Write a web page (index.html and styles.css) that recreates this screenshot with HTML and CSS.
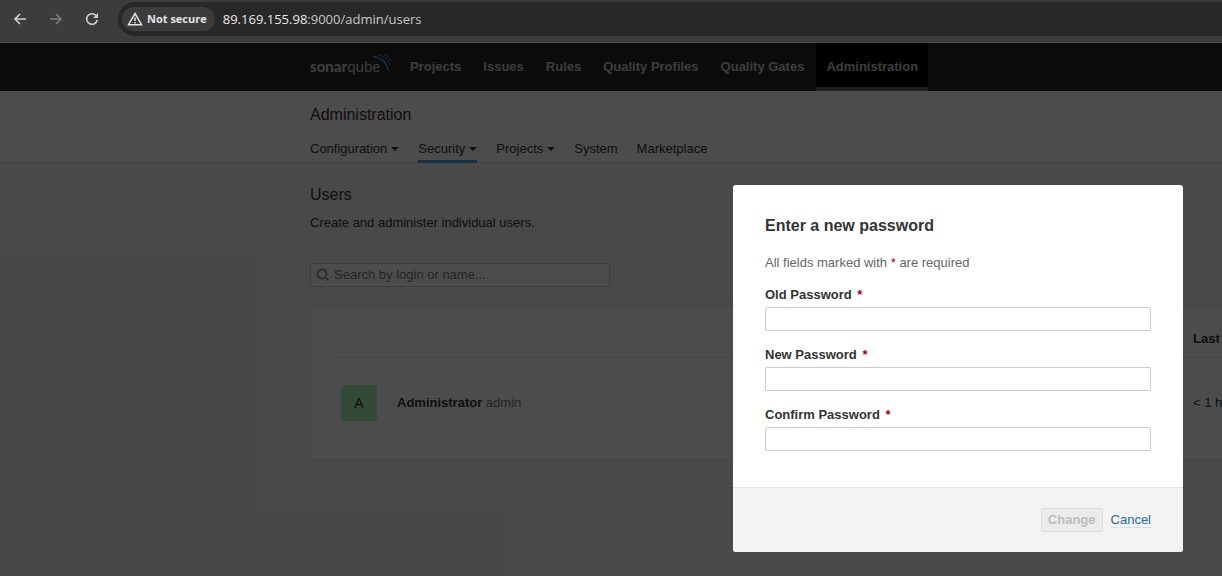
FILE: index.html
```html
<!DOCTYPE html>
<html lang="en">
<head>
<meta charset="utf-8">
<title>Users - Administration</title>
<link rel="stylesheet" href="styles.css">
</head>
<body>
<header class="browser">
  <div class="tools">
    <button class="tool" aria-label="Back"><svg width="16" height="16" viewBox="0 0 16 16"><path d="M14 8H3.200M8 3L3 8L8 13"/></svg></button>
    <button class="tool tool-off" aria-label="Forward" disabled><svg width="16" height="16" viewBox="0 0 16 16"><path d="M2 8H12.800M8 3L13 8L8 13"/></svg></button>
    <button class="tool" aria-label="Reload"><svg width="16" height="16" viewBox="0 0 16 16"><path d="M13.200 9A5.300 5.300 0 1 1 12 4.500"/><path class="tip" d="M14 2V7H9Z"/></svg></button>
  </div>
  <div class="address">
    <button class="secure"><svg width="16" height="14" viewBox="0 0 16 14"><path d="M8 1.500L14.500 12.700H1.500Z"/><path d="M8 5.500V9M8 10V11.500"/></svg>Not secure</button>
    <span class="url"><span class="host">89.169.155.98</span>:9000/admin/users</span>
  </div>
</header>
<div class="app">
  <nav class="global">
    <a class="logo" href="#"><b>sonar</b>qube<svg width="20" height="20" viewBox="0 0 20 20"><path d="M1 3.500C8 3.500 15 9 16 18" stroke-width="1.600"/><path d="M7 1.800C12 3 16.500 7 18 12.500"/><path d="M12 1C15 2.500 17.500 5 19 8"/></svg></a>
    <a href="#">Projects</a>
    <a href="#">Issues</a>
    <a href="#">Rules</a>
    <a href="#">Quality Profiles</a>
    <a href="#">Quality Gates</a>
    <a href="#" class="current">Administration</a>
  </nav>
  <div class="context">
    <h1>Administration</h1>
    <nav class="tabs">
      <a href="#">Configuration<i class="caret"></i></a>
      <a href="#" class="selected">Security<i class="caret"></i></a>
      <a href="#">Projects<i class="caret"></i></a>
      <a href="#">System</a>
      <a href="#">Marketplace</a>
    </nav>
  </div>
  <main class="page">
    <h2>Users</h2>
    <p>Create and administer individual users.</p>
    <label class="search">
      <svg width="14" height="14" viewBox="0 0 14 14"><circle cx="6" cy="6" r="4.500"/><path d="M9.300 9.300L12.500 12.500"/></svg>
      <input type="search" placeholder="Search by login or name..." aria-label="Search by login or name">
    </label>
    <div class="rule"></div>
    <section class="panel">
      <table>
        <colgroup><col class="col-avatar"><col class="col-name"><col></colgroup>
        <thead><tr><th></th><th></th><th>Last</th></tr></thead>
        <tbody><tr><td><span class="avatar">A</span></td><td><strong>Administrator</strong> <span class="login">admin</span></td><td>&lt; 1 h</td></tr></tbody>
      </table>
    </section>
  </main>
  <div class="overlay">
    <form class="modal" role="dialog" aria-labelledby="modal-title">
      <div class="modal-body">
        <h2 id="modal-title">Enter a new password</h2>
        <p>All fields marked with <em>*</em> are required</p>
        <label for="old">Old Password <em>*</em></label>
        <input id="old" type="password">
        <label for="new">New Password <em>*</em></label>
        <input id="new" type="password">
        <label for="confirm">Confirm Password <em>*</em></label>
        <input id="confirm" type="password">
      </div>
      <footer>
        <button class="change" disabled>Change</button>
        <a href="#">Cancel</a>
      </footer>
    </form>
  </div>
</div>
</body>
</html>
```
FILE: styles.css
```css
* { box-sizing: border-box; }
body {
  margin: 0;
  min-height: 100vh;
  display: flex;
  flex-direction: column;
  overflow-x: hidden;
  font: 13px/20px "Liberation Sans", Arial, sans-serif;
  color: #333;
}
h1, h2, p { margin: 0; }
a { color: inherit; text-decoration: none; }
button, input { font: inherit; }
svg { fill: none; stroke: currentColor; }

.browser {
  display: flex;
  align-items: center;
  gap: 18px;
  height: 43px;
  padding: 0 0 4px 12px;
  background: #3c3c3c;
  border-bottom: 1px solid #4a4a4a;
  font-family: "Open Sans", "Noto Sans", sans-serif;
}
.tools {
  display: flex;
  gap: 20px;
}
.tool {
  display: flex;
  padding: 0;
  border: 0;
  background: none;
  color: #d0d0d0;
}
.tool svg { stroke-width: 1.6; }
.tool .tip {
  fill: currentColor;
  stroke: none;
}
.tool-off { color: #7c7c7c; }
.address {
  flex: 1;
  display: flex;
  align-items: center;
  gap: 8px;
  height: 34px;
  padding-left: 4px;
  border-radius: 17px 0 0 17px;
  background: #282828;
}
.secure {
  display: flex;
  align-items: center;
  gap: 4px;
  height: 24px;
  padding: 0 8px 0 5px;
  border: 0;
  border-radius: 12px;
  background: #3c3c3c;
  color: #e3e3e3;
  font-size: 11px;
  font-weight: bold;
}
.secure svg { stroke-width: 1.5; }
.url { color: #c7c7c7; }
.host { color: #e8e8e8; }

.app {
  position: relative;
  flex: 1;
  background: #f3f3f3;
}
.global {
  display: flex;
  gap: 2px;
  height: 48px;
  padding-left: 310px;
  background: #262626;
  color: #ccc;
  font-weight: bold;
  line-height: 48px;
  white-space: nowrap;
}
.global a { padding: 0 10px; }
.global .current {
  background: #000;
  border-bottom: 4px solid #686868;
}
.global .logo {
  display: flex;
  width: 88px;
  padding: 0;
  font: 15px/46px Lato, sans-serif;
}
.logo b { font-weight: 900; }
.logo svg {
  flex: none;
  margin: 10px 0 0 -8px;
  color: #4b9fd5;
}
.context {
  height: 72px;
  padding: 14px 0 0 310px;
  background: #fff;
  border-bottom: 1px solid #e6e6e6;
}
h1, h2 {
  font-size: 16px;
  font-weight: normal;
  line-height: 20px;
}
.tabs {
  display: flex;
  gap: 19px;
  padding-top: 14px;
}
.tabs a {
  height: 24px;
  border-bottom: 3px solid transparent;
}
.tabs .selected { border-color: #4b9fd5; }
.caret {
  display: inline-block;
  margin-left: 4px;
  vertical-align: 2px;
  border: 4px solid transparent;
  border-top-color: currentColor;
  border-bottom: 0;
}
.page { padding: 22px 0 0 310px; }
.page p { padding-top: 8px; }
.search {
  display: flex;
  align-items: center;
  gap: 4px;
  width: 300px;
  height: 24px;
  margin-top: 30px;
  padding-left: 5px;
  border: 1px solid #ccc;
  border-radius: 2px;
  background: #fff;
}
.search svg {
  color: #999;
  stroke-width: 2;
}
.search input {
  flex: 1;
  padding: 0;
  border: 0;
  background: none;
}
.search input::placeholder { color: #777; }
.rule {
  margin-top: 10px;
  border-top: 1px solid #ebebeb;
}
.panel {
  margin-top: 8px;
  padding: 0 0 20px 20px;
  border: 1px solid #e6e6e6;
  border-right: 0;
  background: #fff;
  overflow: hidden;
}
table {
  width: 100%;
  table-layout: fixed;
  border-collapse: collapse;
  white-space: nowrap;
}
.col-avatar { width: 56px; }
.col-name { width: 796px; }
th {
  height: 50px;
  padding: 15px 0 0 10px;
  border-bottom: 1px solid #e6e6e6;
  text-align: left;
}
td {
  height: 82px;
  padding: 9px 0 0 10px;
}
.avatar {
  display: block;
  width: 36px;
  height: 36px;
  border-radius: 2px;
  background: #acf3be;
  font-size: 14px;
  line-height: 36px;
  text-align: center;
}
.login { color: #777; }

.overlay {
  position: absolute;
  inset: 0;
  display: flex;
  justify-content: flex-end;
  align-items: flex-start;
  padding: 142px 39px 0 0;
  background: rgba(0, 0, 0, 0.7);
}
.modal {
  width: 450px;
  border-radius: 3px;
  background: #fff;
  overflow: hidden;
}
.modal-body { padding: 31px 32px 36px; }
.modal h2 {
  font-weight: bold;
  padding-bottom: 17px;
}
.modal p {
  padding-bottom: 12px;
  color: #666;
}
.modal label {
  display: block;
  padding-bottom: 2px;
  font-weight: bold;
}
.modal em {
  color: #a4030f;
  font-style: normal;
}
.modal label em { padding-left: 2px; }
.modal input {
  display: block;
  width: 100%;
  height: 24px;
  border: 1px solid #ccc;
  border-radius: 2px;
}
.modal input + label { padding-top: 14px; }
.modal footer {
  display: flex;
  justify-content: flex-end;
  align-items: center;
  gap: 8px;
  height: 65px;
  padding: 0 32px;
  border-top: 1px solid #e6e6e6;
  background: #f3f3f3;
}
.change {
  height: 24px;
  padding: 0 6px;
  border: 1px solid #ddd;
  border-radius: 2px;
  background: #ebebeb;
  color: #bbb;
  font-weight: bold;
}
.modal footer a {
  border-bottom: 1px solid #cae3f2;
  color: #236a97;
  line-height: 15px;
}
```
